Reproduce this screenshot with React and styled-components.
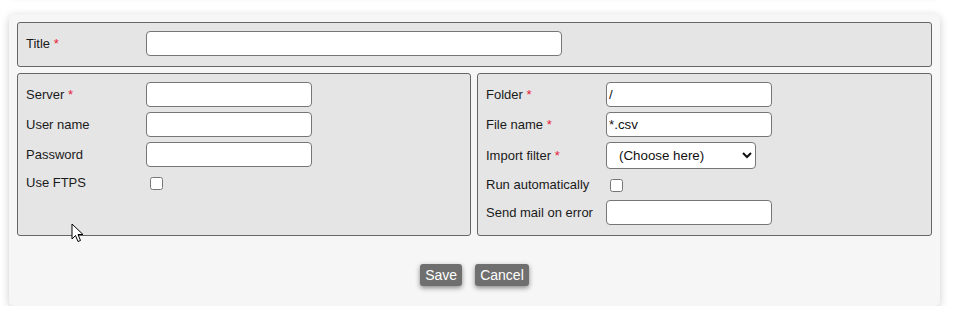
import styled, { createGlobalStyle } from "styled-components";

const GlobalStyle = createGlobalStyle`
  body {
    margin: 0;
    background: #fff;
    font-family: "Liberation Sans", Arial, sans-serif;
    color: #1a1a1a;
  }
`;

const App = () => {
  return (
    <Page>
      <GlobalStyle />
      <PrevCard />
      <Card>
        <Box>
          <Row>
            <Label>
              Title <Req>*</Req>
            </Label>
            <TextInput $w={416} />
          </Row>
        </Box>

        <Columns>
          <Box>
            <Row>
              <Label>
                Server <Req>*</Req>
              </Label>
              <TextInput />
            </Row>
            <Row>
              <Label>User name</Label>
              <TextInput />
            </Row>
            <Row>
              <Label>Password</Label>
              <TextInput type="password" />
            </Row>
            <Row>
              <Label>Use FTPS</Label>
              <Check type="checkbox" />
            </Row>
          </Box>

          <Box>
            <Row>
              <Label>
                Folder <Req>*</Req>
              </Label>
              <TextInput defaultValue="/" />
            </Row>
            <Row>
              <Label>
                File name <Req>*</Req>
              </Label>
              <TextInput defaultValue="*.csv" />
            </Row>
            <Row>
              <Label>
                Import filter <Req>*</Req>
              </Label>
              <Select defaultValue="">
                <option value="">(Choose here)</option>
              </Select>
            </Row>
            <Row>
              <Label>Run automatically</Label>
              <Check type="checkbox" />
            </Row>
            <Row>
              <Label>Send mail on error</Label>
              <TextInput />
            </Row>
          </Box>
        </Columns>

        <Buttons>
          <Button>Save</Button>
          <Button>Cancel</Button>
        </Buttons>

        <Cursor width="13" height="20" viewBox="0 0 13 20">
          <path
            d="M1 1 L1 16 L4.5 12.5 L7 18.5 L9.5 17.5 L7 11.5 L12 11.5 Z"
            fill="#fff"
            stroke="#000"
            strokeWidth="1"
            strokeLinejoin="round"
          />
        </Cursor>
      </Card>
    </Page>
  );
};

const Page = styled.div`
  padding: 0 18px 0 9px;
`;

const PrevCard = styled.div`
  height: 26px;
  margin-top: -30px;
  background: #f5f5f5;
  border-radius: 5px;
  box-shadow: 0 1px 6px rgba(0, 0, 0, 0.12);
`;

const Card = styled.div`
  position: relative;
  margin-top: 18px;
  background: #f6f6f6;
  border-radius: 5px;
  box-shadow: 0 2px 8px rgba(0, 0, 0, 0.2);
  padding: 8px 8px 20px;
  display: flex;
  flex-direction: column;
  gap: 6px;
`;

const Columns = styled.div`
  display: grid;
  grid-template-columns: 454px 1fr;
  gap: 6px;
`;

const Box = styled.div`
  background: #e5e5e5;
  border: 1px solid #666;
  border-radius: 3px;
  padding: 8px 8px 5px;
`;

const Row = styled.div`
  display: flex;
  align-items: center;
  min-height: 21px;
  margin-bottom: 5px;
`;

const Label = styled.span`
  flex: 0 0 120px;
  font-size: 13px;
  color: #1a1a1a;
`;

const Req = styled.span`
  color: #e8203a;
`;

const TextInput = styled.input`
  box-sizing: border-box;
  width: ${(p) => p.$w || 166}px;
  height: 25px;
  margin: 0;
  padding: 1px 2px;
  border: 1px solid #767676;
  border-radius: 4px;
  background: #fff;
  font-family: "Liberation Sans", Arial, sans-serif;
  font-size: 13.33px;
  color: #111;
  outline: none;
`;

const Select = styled.select`
  box-sizing: border-box;
  width: 150px;
  height: 27px;
  margin: 0;
  padding: 0 4px 0 8px;
  border: 1px solid #767676;
  border-radius: 4px;
  background: #fff;
  font-family: "Liberation Sans", Arial, sans-serif;
  font-size: 13.33px;
  color: #111;
`;

const Check = styled.input`
  width: 13px;
  height: 13px;
  margin: 4px 3px 2px 4px;
`;

const Buttons = styled.div`
  display: flex;
  justify-content: center;
  gap: 13px;
  margin-top: 22px;
`;

const Button = styled.button`
  height: 22px;
  padding: 0 5px;
  border: none;
  border-radius: 3px;
  background: #6f6f6f;
  color: #fff;
  font-family: "Liberation Sans", Arial, sans-serif;
  font-size: 14px;
  box-shadow: 0 2px 5px rgba(0, 0, 0, 0.45);
  cursor: pointer;
`;

const Cursor = styled.svg`
  position: absolute;
  left: 62px;
  top: 209px;
  pointer-events: none;
`;

export default App;
